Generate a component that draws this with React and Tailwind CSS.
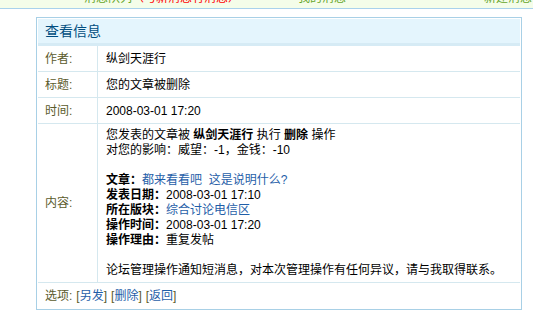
export default function App() {
  const font = { fontFamily: '"Liberation Sans", "Noto Sans CJK SC", sans-serif' };
  const rows = [
    { label: "作者:", value: "纵剑天涯行" },
    { label: "标题:", value: "您的文章被删除" },
    { label: "时间:", value: "2008-03-01 17:20" },
  ];
  return (
    <div className="w-[533px] h-[314px] bg-white overflow-hidden text-[12px]" style={font}>
      <div className="h-[9px] bg-[#f4fde9] border-b border-[#a9d2ec] overflow-hidden">
        <div className="flex whitespace-nowrap -mt-[9px] text-[12px] leading-[14px] text-[#64a52a]">
          <span className="ml-[84px] shrink-0">消息队列</span>
          <span className="shrink-0 text-[#ff0000]">（与新消息有消息）</span>
          <span className="ml-[58px] shrink-0">我的消息</span>
          <span className="ml-[138px] shrink-0">新建消息</span>
        </div>
      </div>
      <div className="ml-[36px] mt-[8px] w-[486px] border border-[#a8d0e6] p-px">
        <div className="bg-[#e4f5fd] border-b-[3px] border-[#d6ebf5] h-[27px] flex items-center pl-[7px] text-[14px] text-[#004d80]">
          查看信息
        </div>
        {rows.map((r) => (
          <div key={r.label} className="flex h-[26px] border-b border-[#d5e8ef]">
            <div className="w-[60px] shrink-0 border-r border-[#d5e8ef] pl-[7px] flex items-center text-[#5b5b2c]">
              {r.label}
            </div>
            <div className="pl-[8px] flex items-center text-black">{r.value}</div>
          </div>
        ))}
        <div className="flex border-b border-[#d5e8ef]">
          <div className="w-[60px] shrink-0 border-r border-[#d5e8ef] pl-[7px] flex items-center text-[#5b5b2c]">
            内容:
          </div>
          <div className="pl-[8px] pt-[4px] pb-[4px] leading-[15px] text-black">
            <div>
              您发表的文章被 <b>纵剑天涯行</b> 执行 <b>删除</b> 操作
            </div>
            <div>对您的影响：威望：-1，金钱：-10</div>
            <div className="h-[15px]" />
            <div>
              <b>文章：</b>
              <a className="text-[#1f5ea8]">都来看看吧&nbsp;&nbsp;这是说明什么?</a>
            </div>
            <div>
              <b>发表日期：</b>2008-03-01 17:10
            </div>
            <div>
              <b>所在版块：</b>
              <a className="text-[#1f5ea8]">综合讨论电信区</a>
            </div>
            <div>
              <b>操作时间：</b>2008-03-01 17:20
            </div>
            <div>
              <b>操作理由：</b>重复发帖
            </div>
            <div className="h-[15px]" />
            <div>论坛管理操作通知短消息，对本次管理操作有任何异议，请与我取得联系。</div>
          </div>
        </div>
        <div className="h-[25px] flex items-center pl-[7px] text-[#5b5b2c]">
          <span>选项:</span>
          <span className="ml-[4px]">
            [<a className="text-[#1f5ea8]">另发</a>]
          </span>
          <span className="ml-[4px]">
            [<a className="text-[#1f5ea8]">删除</a>]
          </span>
          <span className="ml-[4px]">
            [<a className="text-[#1f5ea8]">返回</a>]
          </span>
        </div>
      </div>
    </div>
  );
}
